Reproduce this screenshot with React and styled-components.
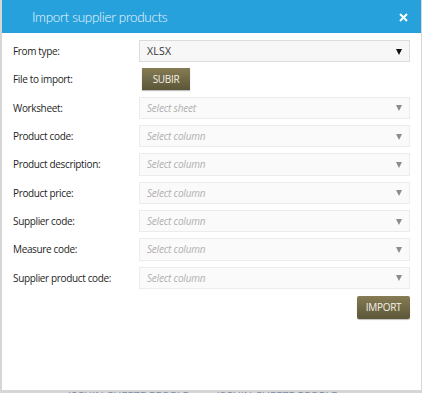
import styled, { createGlobalStyle } from 'styled-components';

const GlobalStyle = createGlobalStyle`
  html, body {
    margin: 0;
    padding: 0;
    overflow: hidden;
    background: #d6d6d6;
  }
  body {
    font-family: 'Open Sans', 'Noto Sans', sans-serif;
  }
`;

const FIELDS = [
  { label: 'Worksheet:', placeholder: 'Select sheet' },
  { label: 'Product code:', placeholder: 'Select column' },
  { label: 'Product description:', placeholder: 'Select column' },
  { label: 'Product price:', placeholder: 'Select column' },
  { label: 'Supplier code:', placeholder: 'Select column' },
  { label: 'Measure code:', placeholder: 'Select column' },
  { label: 'Supplier product code:', placeholder: 'Select column' },
];

function CloseIcon() {
  return (
    <svg width="9" height="9" viewBox="0 0 9 9">
      <path d="M1 1 L8 8 M8 1 L1 8" stroke="#fff" strokeWidth="2" />
    </svg>
  );
}

function Select({ value, placeholder, strong = false }) {
  return (
    <StyledSelect data-strong={strong}>
      {value ? <Value>{value}</Value> : <Placeholder>{placeholder}</Placeholder>}
      <Arrow data-strong={strong} />
    </StyledSelect>
  );
}

export default function App() {
  return (
    <>
      <GlobalStyle />
      <Page>
        <Modal>
          <Header>
            <Title>Import supplier products</Title>
            <CloseButton>
              <CloseIcon />
            </CloseButton>
          </Header>
          <Body>
            <Form>
              <Label>From type:</Label>
              <Select value="XLSX" strong />
              <Label>File to import:</Label>
              <div>
                <UploadButton>SUBIR</UploadButton>
              </div>
              {FIELDS.map((f) => (
                <Row key={f.label}>
                  <Label>{f.label}</Label>
                  <Select placeholder={f.placeholder} />
                </Row>
              ))}
            </Form>
            <Actions>
              <ImportButton>IMPORT</ImportButton>
            </Actions>
          </Body>
        </Modal>
        <Behind>
          <span>ISCHIN CHEEZE PEOPLE</span>
          <span>ISCHIN CHEEZE PEOPLE</span>
        </Behind>
      </Page>
    </>
  );
}

// styled-components

const Page = styled.div`
  width: 422px;
  height: 393px;
  padding: 0 1px 0 2px;
  box-sizing: border-box;
  overflow: hidden;
`;

const Modal = styled.div`
  background: #fff;
  height: 390px;
  display: flex;
  flex-direction: column;
`;

const Header = styled.div`
  height: 33px;
  background: #27a1dc;
  display: flex;
  align-items: center;
  justify-content: space-between;
  padding: 0 13px 0 30px;
`;

const Title = styled.div`
  color: #eef7fc;
  font-family: Lato, 'Open Sans', sans-serif;
  font-weight: 300;
  font-size: 13.5px;
  letter-spacing: -0.3px;
`;

const CloseButton = styled.div`
  display: flex;
  align-items: center;
  margin-top: 1px;
`;

const Body = styled.div`
  padding: 7px 11px 0 11px;
`;

const Form = styled.div`
  display: grid;
  grid-template-columns: 126px 1fr;
  grid-auto-rows: 22.33px;
  row-gap: 6px;
  align-items: center;
`;

const Row = styled.div`
  display: contents;
`;

const Label = styled.div`
  font-size: 10px;
  color: #1e1e1e;
  letter-spacing: -0.35px;
  white-space: nowrap;
`;

const StyledSelect = styled.div`
  height: 100%;
  box-sizing: border-box;
  display: flex;
  align-items: center;
  justify-content: space-between;
  padding: 0 7px 0 7px;
  background: ${({ 'data-strong': strong }) => (strong ? '#f7f7f7' : '#fafafa')};
  border: 1px solid ${({ 'data-strong': strong }) => (strong ? '#dcdcdc' : '#ececec')};
`;

const Value = styled.span`
  font-size: 10.5px;
  color: #333;
  letter-spacing: 0.2px;
`;

const Placeholder = styled.span`
  font-size: 10px;
  font-style: italic;
  color: #b0b0b0;
  letter-spacing: -0.2px;
`;

const Arrow = styled.span`
  width: 0;
  height: 0;
  margin-top: 1px;
  border-left: ${({ 'data-strong': s }) => (s ? '3.5px' : '3px')} solid transparent;
  border-right: ${({ 'data-strong': s }) => (s ? '3.5px' : '3px')} solid transparent;
  border-top: ${({ 'data-strong': s }) => (s ? '6px solid #111' : '6px solid #8c8c8c')};
`;

const ButtonBase = styled.button`
  border: none;
  border-radius: 2px;
  color: #f4f1e6;
  font-family: 'Open Sans', sans-serif;
  font-size: 10px;
  letter-spacing: -0.3px;
  background: linear-gradient(#867c55, #5b5638);
  box-shadow: 0 1px 1px rgba(0, 0, 0, 0.25);
  padding: 0;
  cursor: pointer;
`;

const UploadButton = styled(ButtonBase)`
  margin-left: 3px;
  width: 48px;
  height: 22px;
  border-radius: 0;
  display: block;
`;

const Actions = styled.div`
  display: flex;
  justify-content: flex-end;
  margin-top: 7px;
`;

const ImportButton = styled(ButtonBase)`
  width: 53px;
  height: 23px;
`;

const Behind = styled.div`
  display: flex;
  gap: 28px;
  padding-left: 66px;
  font-size: 11px;
  line-height: 11px;
  color: #7a8aa6;
  margin-top: 0;
`;
